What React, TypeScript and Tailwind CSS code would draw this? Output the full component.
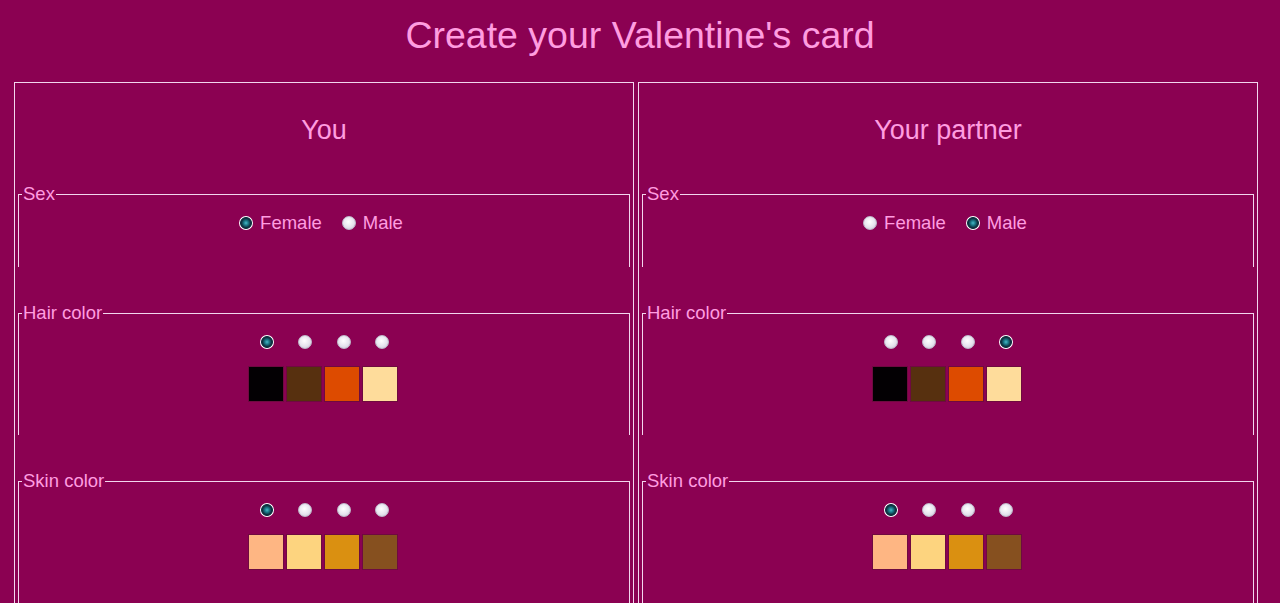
import React, { useState } from 'react';

type Sex = 'female' | 'male';

interface Person {
  sex: Sex;
  hair: number;
  skin: number;
}

const HAIR_COLORS = ['#030003', '#57300f', '#dd4b00', '#fedc9b'];
const SKIN_COLORS = ['#feb683', '#fdd47f', '#da9011', '#86501f'];

// Round radio drawn with gradients, close to the old Windows look
const Radio: React.FC<{ checked: boolean; onClick: () => void }> = ({ checked, onClick }) => (
  <span
    role="radio"
    aria-checked={checked}
    onClick={onClick}
    className={`inline-block w-[14px] h-[14px] rounded-full cursor-pointer shrink-0 ${
      checked
        ? 'bg-[radial-gradient(circle,#45b8c8_0%,#17707f_26%,#0f3040_46%,#123545_56%,#ffffff_64%,#ece6f2_100%)]'
        : 'border border-[#c0bccc] bg-[radial-gradient(circle_at_45%_40%,#ffffff_0%,#e6e4ee_55%,#c4c2d4_100%)]'
    }`}
  />
);

const Group: React.FC<{ title: string; height: string; top: string; children: React.ReactNode }> = ({
  title,
  height,
  top,
  children,
}) => (
  <fieldset className={`${height} ${top} mx-[3px] border border-b-0 border-[#f3d6ee]`}>
    <legend className="ml-[3px] px-[1px] text-[18.5px] leading-[22px]">{title}</legend>
    {children}
  </fieldset>
);

const ColorPicker: React.FC<{ colors: string[]; value: number; onChange: (i: number) => void }> = ({
  colors,
  value,
  onChange,
}) => (
  <div className="flex flex-col items-center pr-[3px]">
    <div className="flex mt-[8px] h-[20px] items-center pl-[4px]">
      {colors.map((c, i) => (
        <div key={c} className="w-[38.5px] flex justify-center">
          <Radio checked={value === i} onClick={() => onChange(i)} />
        </div>
      ))}
    </div>
    <div className="flex gap-[2px] mt-[14px]">
      {colors.map((c, i) => (
        <div
          key={c}
          onClick={() => onChange(i)}
          className="w-[36px] h-[36px] border border-[#6e0a40] cursor-pointer"
          style={{ backgroundColor: c }}
        />
      ))}
    </div>
  </div>
);

const PersonPanel: React.FC<{ title: string; person: Person; onChange: (p: Person) => void }> = ({
  title,
  person,
  onChange,
}) => (
  <div className="w-[620px] h-[540px] border border-[#f3d6ee] overflow-hidden">
    <div className="h-[92px] pt-[2px] flex items-center justify-center text-[27px]">{title}</div>

    <Group title="Sex" height="h-[84px]" top="mt-[8px]">
      <div className="flex justify-center items-center mt-[8px] pr-[6px] h-[20px] text-[18.5px]">
        <label className="flex items-center gap-[7px]">
          <Radio checked={person.sex === 'female'} onClick={() => onChange({ ...person, sex: 'female' })} />
          Female
        </label>
        <label className="flex items-center gap-[7px] ml-[20px]">
          <Radio checked={person.sex === 'male'} onClick={() => onChange({ ...person, sex: 'male' })} />
          Male
        </label>
      </div>
    </Group>

    <Group title="Hair color" height="h-[133px]" top="mt-[35px]">
      <ColorPicker colors={HAIR_COLORS} value={person.hair} onChange={(hair) => onChange({ ...person, hair })} />
    </Group>

    <Group title="Skin color" height="h-[133px]" top="mt-[35px]">
      <ColorPicker colors={SKIN_COLORS} value={person.skin} onChange={(skin) => onChange({ ...person, skin })} />
    </Group>
  </div>
);

const App: React.FC = () => {
  const [you, setYou] = useState<Person>({ sex: 'female', hair: 0, skin: 0 });
  const [partner, setPartner] = useState<Person>({ sex: 'male', hair: 3, skin: 0 });

  return (
    <div className="min-h-screen bg-[#8b0152] text-[#ff9de0] font-['Liberation_Sans',Arial,sans-serif] overflow-hidden h-[603px]">
      <h1 className="h-[82px] pt-[13px] text-center text-[37.5px] leading-[44px]">Create your Valentine's card</h1>
      <div className="flex gap-[4px] pl-[14px]">
        <PersonPanel title="You" person={you} onChange={setYou} />
        <PersonPanel title="Your partner" person={partner} onChange={setPartner} />
      </div>
    </div>
  );
};

export default App;
